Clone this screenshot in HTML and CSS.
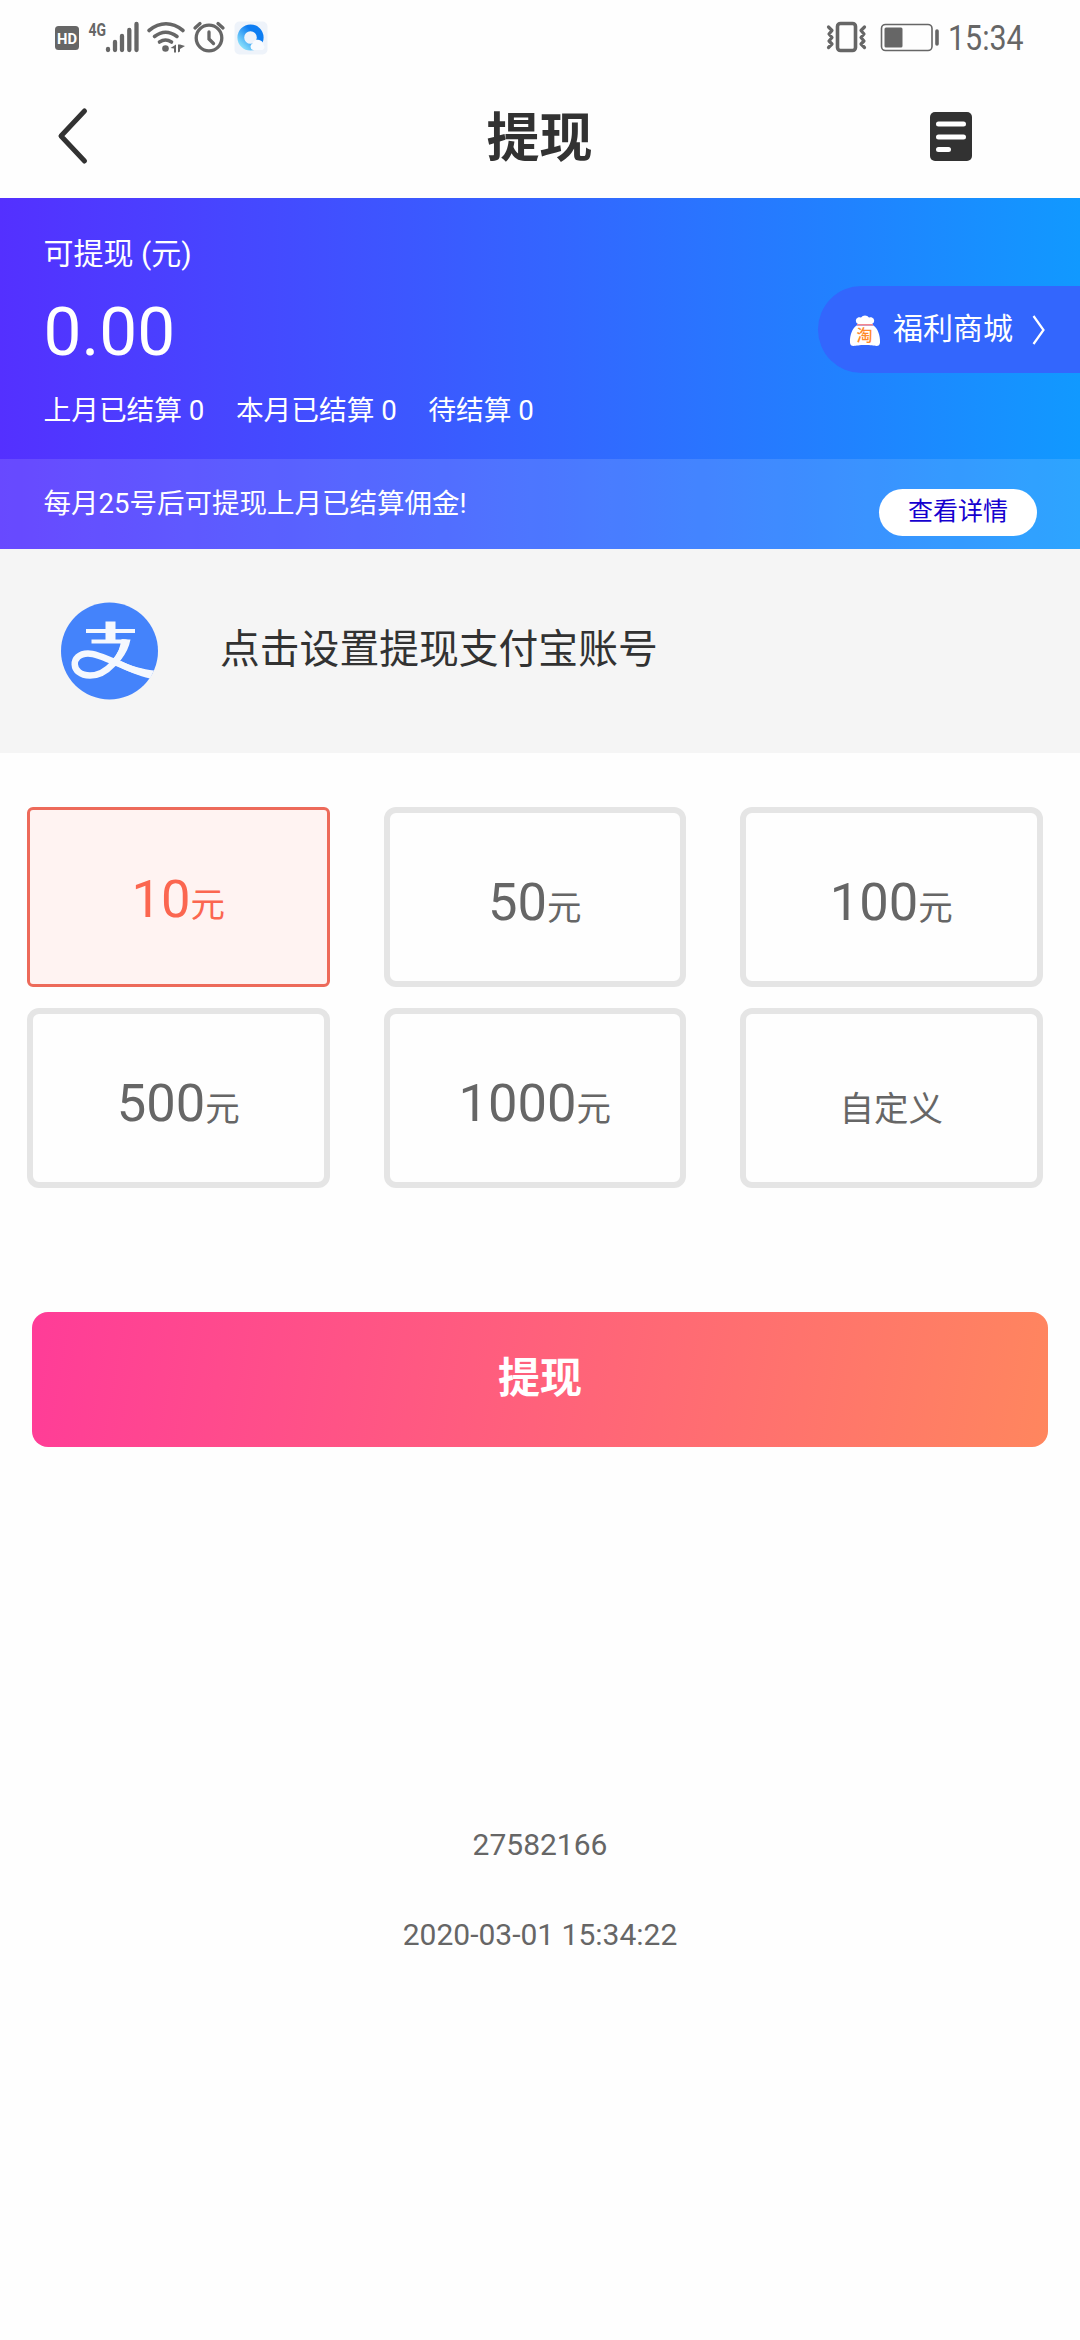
FILE: index.html
```html
<!DOCTYPE html>
<html lang="zh-CN">
<head>
<meta charset="utf-8">
<title>提现</title>
<link rel="stylesheet" href="styles.css">
</head>
<body>
<header class="status">
  <svg class="status-icons" width="250" height="80" viewBox="0 0 250 80" fill="none" stroke="#666" stroke-linecap="round">
    <defs>
      <linearGradient id="ring" x1="1" y1="0" x2="0" y2="1"><stop offset=".3" stop-color="#0d7df2"/><stop offset="1" stop-color="#8fe4fb"/></linearGradient>
    </defs>
    <rect x="15" y="26" width="24" height="24" rx="3.5" fill="#666" stroke="none"/>
    <text class="hd" x="17" y="43.500" textLength="20" lengthAdjust="spacingAndGlyphs">HD</text>
    <text class="net" x="48.500" y="35.500" textLength="17.500" lengthAdjust="spacingAndGlyphs">4G</text>
    <path stroke-width="4.300" d="M68 49v1M75 42v8M82 36v14M89.300 30v20M96.500 24v26"/>
    <path stroke-width="3.600" d="M109 30.500C120 21.700 132 21.700 143 30.500M114.500 36.500Q125.500 28 137 36.500M119.500 42Q125.500 38 131.500 42"/>
    <circle cx="125.500" cy="48.500" r="3.300" fill="#666" stroke="none"/>
    <path d="M130.500 48l5.500-3.500v8h-2v-4zM138 44.500v8l2-1v-2.500l5-3-5-1.500z" fill="#666" stroke="none"/>
    <circle cx="169" cy="38" r="12.800" stroke-width="3.300"/>
    <path stroke-width="3.300" d="M169 32v7l4.500 4.500M155 28l5-4.500M183 28l-5-4.500"/>
    <rect x="194.500" y="21.500" width="33" height="33" rx="5" fill="#eef3fa" stroke="none"/>
    <circle cx="210.500" cy="37.500" r="9.700" stroke="url(#ring)" stroke-width="6.800"/>
    <path d="M213 50a3.500 3.500 0 0 1-.5-6.500 5.500 5.500 0 0 1 8-3 5 5 0 0 1 3 4.500 3 3 0 0 1-1 5z" fill="#f8fbff" stroke="none"/>
  </svg>
  <svg class="status-power" width="125" height="80" viewBox="825 0 125 80" fill="none" stroke="#666" stroke-linecap="round" stroke-linejoin="round">
    <rect x="837.500" y="23.500" width="18" height="27" rx="3" stroke-width="3.600"/>
    <path stroke-width="3.200" d="M828.500 27l3.500 3.500-3 3.500 3 3.500-3 3.500 3 3-3.500 3.500M864.500 27l-3.500 3.500 3 3.500-3 3.500 3 3.500-3 3 3.500 3.500"/>
    <rect x="881.500" y="24.500" width="50.500" height="26" rx="4" stroke-width="1.600"/>
    <rect x="884.500" y="27.500" width="18" height="20" rx="1.500" fill="#666" stroke="none"/>
    <path stroke-width="3.600" d="M937 31v13"/>
  </svg>
  <span class="clock">15:34</span>
</header>

<nav class="navbar">
  <svg class="back" width="36" height="60" viewBox="0 0 36 60" fill="none" stroke="#323232" stroke-width="5" stroke-linecap="round" stroke-linejoin="round"><path d="M28.500 5L5 30l23.500 25"/></svg>
  <h1 class="title">提现</h1>
  <svg class="records" width="42" height="49" viewBox="0 0 42 49"><rect width="42" height="49" rx="5" fill="#323232"/><path d="M8.500 12h25M8.500 25h25M8.500 37.500h10" stroke="#fff" stroke-width="5" stroke-linecap="round"/></svg>
</nav>

<section class="balance">
  <div class="balance-main">
    <div class="summary">
      <div class="label">可提现 (元)</div>
      <div class="amount">0.00</div>
      <div class="stats"><span>上月已结算 0</span><span>本月已结算 0</span><span>待结算 0</span></div>
    </div>
    <a class="mall">
      <svg width="32" height="32" viewBox="0 0 32 32"><path d="M7.500 10.500h17c4 3 6.800 9 6.500 17-.1 2.500-1.500 3.500-3.500 3.500-3-.3-5.500-1-11.500-1s-8.500.7-11.500 1C2.500 31 1 30 1 27.500.7 19.500 3.500 13.500 7.500 10.500zM9 9a3.500 3.500 0 0 1 0-6.500c1.500-.7 3 0 3 0Q13.500.500 16 .5t4 2s1.500-.7 3 0A3.500 3.500 0 0 1 23 9z" fill="#fff"/><path d="M8 9.800h16" stroke="#f88" stroke-width="1.500"/><text class="tao" x="15.500" y="26" text-anchor="middle">淘</text></svg>
      <span class="mall-text">福利商城</span>
      <svg class="arrow" width="14" height="30" viewBox="0 0 14 30" fill="none" stroke="#fff" stroke-width="2.200"><path d="M1.500 1l10 14-10 14"/></svg>
    </a>
  </div>
  <div class="notice">
    <span>每月25号后可提现上月已结算佣金!</span>
    <a class="detail">查看详情</a>
  </div>
</section>

<section class="account">
  <svg width="97" height="98" viewBox="0 0 97 98"><circle cx="48.500" cy="49" r="48.500" fill="#4483fb"/><g fill="none" stroke="#f5f8fe"><path d="M25 29h49M30.500 39.500h35" stroke-width="4"/><path d="M49.500 19.500v20" stroke-width="10"/><path d="M64.500 37.500C62 54 46 73.500 29 73.500 9 73.500 9 51.500 27 51.500c14 0 38 16 55 19" stroke-width="6.500"/></g><path d="M60 59c10 5 22 8.500 33 9.500l-4 8C78 74 66 69 56 64z" fill="#f5f8fe"/><path d="M60 37.500h9.500q-2 11-10 21l-5 4-3-4q8-10 8.500-21z" fill="#f5f8fe"/></svg>
  <span class="account-text">点击设置提现支付宝账号</span>
</section>

<main class="amounts">
  <div class="option selected">10<small>元</small></div>
  <div class="option">50<small>元</small></div>
  <div class="option">100<small>元</small></div>
  <div class="option">500<small>元</small></div>
  <div class="option">1000<small>元</small></div>
  <div class="option custom"><small>自定义</small></div>
</main>

<button class="submit">提现</button>

<footer class="info">
  <div>27582166</div>
  <div>2020-03-01 15:34:22</div>
</footer>
</body>
</html>
```
FILE: styles.css
```css
* { box-sizing: border-box; }
body {
  margin: 0;
  width: 1080px;
  height: 2340px;
  overflow: hidden;
  background: #fefefe;
  font-family: Roboto, "Noto Sans CJK SC", sans-serif;
  color: #323232;
}
svg { display: block; flex: none; }

.status { height: 80px; display: flex; padding-left: 40px; }
.status-icons { overflow: visible; }
.status-power { margin-left: 535px; }
.clock {
  font-size: 34.5px;
  line-height: 77px;
  color: #666;
  transform: scaleX(.88);
  transform-origin: left;
  margin-left: -2px;
}
.hd { font: bold 15px Roboto, sans-serif; fill: #fff; stroke: none; }
.net { font: bold 19px Roboto, sans-serif; fill: #666; stroke: none; }

.navbar { height: 118px; display: flex; align-items: center; padding: 0 108px 6px 56px; }
.title { flex: 1; margin: 3px 0 -3px; padding-left: 57px; text-align: center; font-size: 53px; line-height: 76px; font-weight: 700; }
.records { margin-top: 1px; }

.balance { height: 351px; background: linear-gradient(90deg, #5430ff 0%, #3366ff 52%, #1199ff 100%); color: #fff; }
.balance-main { height: 261px; display: flex; justify-content: space-between; padding-left: 43.5px; }
.summary { display: flex; flex-direction: column; }
.label { font-size: 30px; line-height: 44px; margin-top: 34px; }
.amount { font-size: 67.5px; line-height: 80px; margin-top: 16px; }
.stats { display: flex; gap: 31.5px; font-size: 27.7px; line-height: 40px; margin-top: 19px; }
.mall {
  width: 262px;
  height: 87px;
  margin-top: 88px;
  padding: 3px 0 0 31px;
  display: flex;
  align-items: center;
  background: #3366fd;
  border-radius: 44px 0 0 44px;
}
.tao { font: 500 16px "Noto Sans CJK SC", sans-serif; fill: #ff8a2b; }
.mall-text { font-size: 30px; line-height: 44px; margin: -5px 0 0 12px; }
.arrow { margin: -3px 0 0 19px; }
.notice {
  height: 90px;
  padding: 0 43px 0 43.5px;
  display: flex;
  justify-content: space-between;
  background: rgba(255, 255, 255, .12);
  font-size: 27.5px;
  line-height: 89px;
}
.detail {
  width: 158px;
  height: 47px;
  margin-top: 30px;
  border-radius: 24px;
  background: #fff;
  color: #1500cf;
  font-size: 25px;
  line-height: 45px;
  text-align: center;
}

.account { height: 204px; padding-left: 61px; display: flex; align-items: center; background: #f5f5f5; }
.account-text { font-size: 39.8px; line-height: 58px; margin: -3px 0 0 62px; }

.amounts { display: grid; grid-template-columns: repeat(3, 302.5px); column-gap: 54px; row-gap: 21px; padding: 54px 0 0 27px; }
.option {
  height: 180px;
  border: 6px solid #e5e5e5;
  border-radius: 12px;
  text-align: center;
  font-size: 52.5px;
  line-height: 179px;
  color: #666;
  overflow: hidden;
}
.option small { font-size: 34.5px; line-height: 1; }
.selected { border: 3px solid #ed6a5a; border-radius: 6px; background: #fff3f2; color: #fb6650; }

.submit {
  display: block;
  width: 1016px;
  height: 135px;
  margin: 124px 32px 0;
  padding: 0 0 11px;
  border: 0;
  border-radius: 16px;
  background: linear-gradient(100deg, #ff3c98, #ff865e);
  color: #fff;
  font: 700 42px Roboto, "Noto Sans CJK SC", sans-serif;
}

.info { padding-top: 376px; text-align: center; font-size: 30px; line-height: 44px; color: #666; display: grid; gap: 46px; }
```
